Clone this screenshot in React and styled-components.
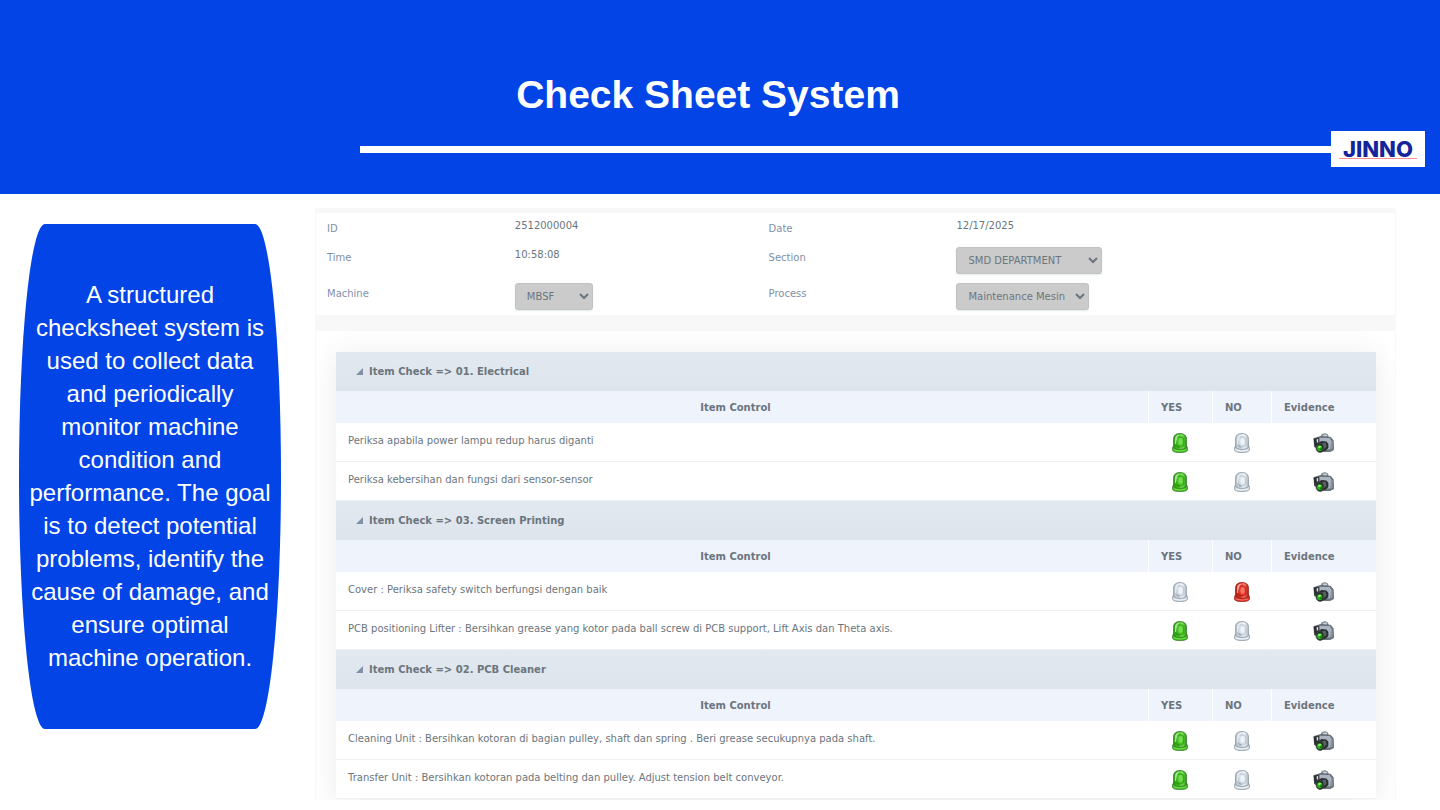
import React from 'react';
import styled, { createGlobalStyle } from 'styled-components';

const GlobalStyle = createGlobalStyle`
  * {
    box-sizing: border-box;
  }

  body {
    margin: 0;
    background: #ffffff;
    font-family: "Liberation Sans", Arial, sans-serif;
  }
`;

const Page = styled.div`
  display: flex;
  flex-direction: column;
  height: 100vh;
  padding-bottom: 10px;
  overflow: hidden;
`;

const Header = styled.header`
  flex: none;
  padding: 70px 0 27px;
  background: #0244e6;
`;

const Title = styled.h1`
  margin: 0 0 11px;
  padding-right: 24px;
  color: #ffffff;
  font-size: 39px;
  line-height: 50px;
  text-align: center;
`;

const RuleRow = styled.div`
  display: flex;
  align-items: center;
  padding: 0 15px 0 25%;
`;

const Rule = styled.div`
  flex: 1;
  height: 7px;
  background: #ffffff;
`;

const Logo = styled.div`
  display: flex;
  align-items: center;
  justify-content: center;
  width: 94px;
  height: 36px;
  background: #ffffff;
`;

const LogoText = styled.span`
  padding: 0 4px;
  border-bottom: 1px solid #ff8f96;
  color: #14259b;
  font-family: Inter, sans-serif;
  font-size: 22px;
  font-weight: 800;
  line-height: 18px;
`;

const Main = styled.main`
  display: grid;
  grid-template-columns: 315px 1fr;
  flex: 1;
  min-height: 0;
  padding-right: 44px;
`;

const Side = styled.aside`
  padding: 30px 34px 0 19px;
`;

const Summary = styled.p`
  margin: 0;
  padding: 54px 8px 55px;
  border-radius: 26px / 50%;
  background: #0244e6;
  color: #ffffff;
  font-size: 24px;
  line-height: 33px;
  text-align: center;
`;

const Sheet = styled.section`
  display: flex;
  flex-direction: column;
  gap: 16px;
  min-height: 0;
  margin-top: 14px;
  padding: 5px 1px 0;
  background: #f8f8f9;
  color: #6b757d;
  font-family: "DejaVu Sans", Verdana, sans-serif;
  font-size: 10px;
`;

const InfoPanel = styled.div`
  display: grid;
  grid-template-columns: 188fr 254fr 188fr 439fr;
  grid-template-rows: 29px 36px 37px;
  padding-left: 11px;
  background: #ffffff;
`;

const Label = styled.label`
  padding-top: 6px;
  color: #8190a8;
  line-height: 20px;
`;

const Value = styled.div`
  padding-top: 5px;
  line-height: 16px;
`;

const Select = styled.select`
  display: block;
  width: ${(props) => props.$width};
  height: 27px;
  padding: 0 0 0 7px;
  border: 1px solid #c0c2c4;
  border-radius: 3px;
  background-color: #cbcbcb;
  box-shadow: 0 1px 2px #e6eceb;
  color: #6b757d;
  font: inherit;
`;

const ListPanel = styled.div`
  flex: 1;
  min-height: 0;
  padding: 21px 19px 0 20px;
  overflow: hidden;
  background: #ffffff;
`;

const Table = styled.table`
  width: 100%;
  border-collapse: separate;
  border-spacing: 0;
  table-layout: fixed;
  background: #ffffff;
  box-shadow: 0 4px 28px rgba(60, 70, 80, 0.11);
`;

const GroupCell = styled.th`
  height: 39px;
  padding: 0 20px;
  background: linear-gradient(#e2e9f0, #dde4eb);
  text-align: left;
`;

const GroupToggle = styled.button`
  display: flex;
  align-items: center;
  gap: 6px;
  padding: 0;
  border: none;
  background: none;
  color: inherit;
  font: inherit;
  font-weight: bold;
  cursor: pointer;
`;

const HeadCell = styled.th`
  height: 32px;
  padding: ${(props) => (props.$center ? '0 25px 0 12px' : '0 12px')};
  border-left: ${(props) => (props.$center ? 'none' : '1px solid #ffffff')};
  background: #eff3fc;
  text-align: ${(props) => (props.$center ? 'center' : 'left')};
`;

const NameCell = styled.td`
  height: 39px;
  padding: 0 12px 4px;
  border-bottom: 1px solid #f0f1f2;
`;

const IconCell = styled.td`
  padding: 2px 0 0 1px;
  border-bottom: 1px solid #f0f1f2;
  text-align: center;

  svg {
    display: block;
    margin: 0 auto;
  }
`;

const EvidenceButton = styled.button`
  display: block;
  margin: 0 auto;
  padding: 0;
  border: none;
  background: none;
  cursor: pointer;
`;

const lampColors = {
  green: { edge: '#3b7d2b', light: '#7fe45c', mid: '#43c11f', dark: '#259a0c' },
  red: { edge: '#94231c', light: '#ff8474', mid: '#e23527', dark: '#b8170e' },
  off: { edge: '#8e9aa6', light: '#f6f9fb', mid: '#d3dce4', dark: '#b0bcc7' },
};

const groups = [
  {
    title: 'Item Check => 01. Electrical',
    items: [
      { name: 'Periksa apabila power lampu redup harus diganti', ok: true },
      { name: 'Periksa kebersihan dan fungsi dari sensor-sensor', ok: true },
    ],
  },
  {
    title: 'Item Check => 03. Screen Printing',
    items: [
      { name: 'Cover : Periksa safety switch berfungsi dengan baik', ok: false },
      {
        name: 'PCB positioning Lifter : Bersihkan grease yang kotor pada ball screw di PCB support, Lift Axis dan Theta axis.',
        ok: true,
      },
    ],
  },
  {
    title: 'Item Check => 02. PCB Cleaner',
    items: [
      {
        name: 'Cleaning Unit : Bersihkan kotoran di bagian pulley, shaft dan spring . Beri grease secukupnya pada shaft.',
        ok: true,
      },
      { name: 'Transfer Unit : Bersihkan kotoran pada belting dan pulley. Adjust tension belt conveyor.', ok: true },
    ],
  },
];

function Lamp({ color, label }) {
  const c = lampColors[color];
  const id = `lamp-${color}`;
  return (
    <svg width="16" height="20" viewBox="0 0 16 20" role="img" aria-label={label}>
      <defs>
        <linearGradient id={id} x1="0" x2="1">
          <stop offset="0" stopColor={c.dark} />
          <stop offset="0.35" stopColor={c.mid} />
          <stop offset="0.65" stopColor={c.light} />
          <stop offset="1" stopColor={c.dark} />
        </linearGradient>
      </defs>
      {/* base */}
      <path d="M.6 14.6Q.6 13.2 2 13.2H14Q15.4 13.2 15.4 14.6V17.4Q14.6 19.5 8 19.5T.6 17.4Z" fill={c.mid} stroke={c.edge} strokeWidth="0.8" />
      {/* dome */}
      <path d="M1.6 6.4C1.6 2.4 3.8.6 8 .6S14.4 2.4 14.4 6.4V14.6Q12.4 16.4 8 16.4T1.6 14.6Z" fill={`url(#${id})`} stroke={c.edge} strokeWidth="0.9" />
      <path d="M4.2 7C4.2 4.6 5.4 3.8 8 3.8S11.8 4.6 11.8 7V12.4Q10.8 14.2 8 14.2T4.2 12.4Z" fill={c.mid} stroke={c.dark} strokeWidth="0.7" />
      <ellipse cx="8.6" cy="8.4" rx="2.2" ry="3.4" fill={c.light} opacity="0.8" />
      <path d="M2.9 6.4C3 3.2 4.6 1.7 7.8 1.7Q5 3.4 4.6 7.5L4 11H2.9Z" fill="#ffffff" opacity="0.6" />
      <path d="M4.6 11.8L8 14.2L5.8 14.6Q4.6 13.8 4.6 11.8Z" fill={c.edge} opacity="0.9" />
      <path d="M1.8 17Q8 19.2 14.2 17" fill="none" stroke={c.light} strokeWidth="0.8" />
    </svg>
  );
}

function Camera() {
  return (
    <svg width="21" height="20" viewBox="0 0 21 20" aria-hidden="true">
      {/* flash and body */}
      <path d="M7.6 4.8L8.8 1.4L12 .5L14.8 1.8L15.4 5.4Z" fill="#8a939c" stroke="#6b737b" strokeWidth="0.6" />
      <ellipse cx="12" cy="2.8" rx="2.2" ry="1.3" fill="#c4ced8" />
      <path d="M.8 5.5L7.2 3.6L17.6 4.2L20.2 7.4L20.6 16.8L17.2 18.6L11 18.4L1.6 14Z" fill="#69717a" stroke="#454b52" strokeWidth="0.6" />
      <path d="M6.6 4.8L16.8 5L18.2 8L17.4 16.4L13.6 16.6L14 9.5L6.8 8.7Z" fill="#aab5c1" />
      <path d="M18.1 6.4L19.6 8.2V15.8L17.9 16.8Z" fill="#8a95a1" />
      <path d="M.8 5.8L5.8 4.8L6.3 11L4.6 14.2L1.5 13.4Z" fill="#2b2f33" />
      <path d="M3.6 6.3L5.2 6V9.4L3.8 9.6Z" fill="#d8e0e6" />
      {/* lens */}
      <path d="M5 10.4L8.6 8L13.4 8.6L15.4 11V15L12 18L8 19.4L4.2 18Z" fill="#2a2e31" />
      <path d="M9.4 10L12.6 9.6L13.6 13.4L11.2 16Z" fill="#596066" />
      <ellipse cx="6.9" cy="15" rx="3.9" ry="4.4" fill="#1d2a1d" stroke="#4f555a" strokeWidth="0.7" />
      <ellipse cx="6.7" cy="15.3" rx="2.7" ry="3" fill="#28ad16" />
      <path d="M4.8 14.2Q6.2 11.8 8.5 13.4L6.4 15.2Z" fill="#8df26f" />
      <path d="M7 16.4L8.8 14.8L8.3 17.2Z" fill="#0c4a08" />
    </svg>
  );
}

function CheckGroup({ title, items }) {
  return (
    <tbody>
      <tr>
        <GroupCell colSpan={4} scope="colgroup">
          <GroupToggle type="button" aria-expanded="true">
            <svg width="7" height="7" viewBox="0 0 7 7" aria-hidden="true">
              <path d="M7 0V7H0Z" fill="#8190a8" />
            </svg>
            {title}
          </GroupToggle>
        </GroupCell>
      </tr>
      <tr>
        <HeadCell $center>Item Control</HeadCell>
        <HeadCell>YES</HeadCell>
        <HeadCell>NO</HeadCell>
        <HeadCell>Evidence</HeadCell>
      </tr>
      {items.map((item) => (
        <tr key={item.name}>
          <NameCell>{item.name}</NameCell>
          <IconCell>
            <Lamp color={item.ok ? 'green' : 'off'} label={item.ok ? 'Yes' : 'Off'} />
          </IconCell>
          <IconCell>
            <Lamp color={item.ok ? 'off' : 'red'} label={item.ok ? 'Off' : 'No'} />
          </IconCell>
          <IconCell>
            <EvidenceButton type="button" aria-label="Evidence photo">
              <Camera />
            </EvidenceButton>
          </IconCell>
        </tr>
      ))}
    </tbody>
  );
}

function App() {
  return (
    <Page>
      <GlobalStyle />
      <Header>
        <Title>Check Sheet System</Title>
        <RuleRow>
          <Rule />
          <Logo>
            <LogoText>JINNO</LogoText>
          </Logo>
        </RuleRow>
      </Header>
      <Main>
        <Side>
          <Summary>
            A structured checksheet system is used to collect data and periodically monitor machine condition and
            performance. The goal is to detect potential problems, identify the cause of damage, and ensure optimal
            machine operation.
          </Summary>
        </Side>
        <Sheet>
          <InfoPanel>
            <Label as="div">ID</Label>
            <Value>2512000004</Value>
            <Label as="div">Date</Label>
            <Value>12/17/2025</Value>
            <Label as="div">Time</Label>
            <Value>10:58:08</Value>
            <Label htmlFor="section">Section</Label>
            <Value>
              <Select id="section" $width="146px">
                <option>SMD DEPARTMENT</option>
              </Select>
            </Value>
            <Label htmlFor="machine">Machine</Label>
            <Value>
              <Select id="machine" $width="78px">
                <option>MBSF</option>
              </Select>
            </Value>
            <Label htmlFor="process">Process</Label>
            <Value>
              <Select id="process" $width="133px">
                <option>Maintenance Mesin</option>
              </Select>
            </Value>
          </InfoPanel>
          <ListPanel>
            <Table>
              <colgroup>
                <col />
                <col width="64" />
                <col width="59" />
                <col width="105" />
              </colgroup>
              {groups.map((group) => (
                <CheckGroup key={group.title} {...group} />
              ))}
            </Table>
          </ListPanel>
        </Sheet>
      </Main>
    </Page>
  );
}

export default App;
